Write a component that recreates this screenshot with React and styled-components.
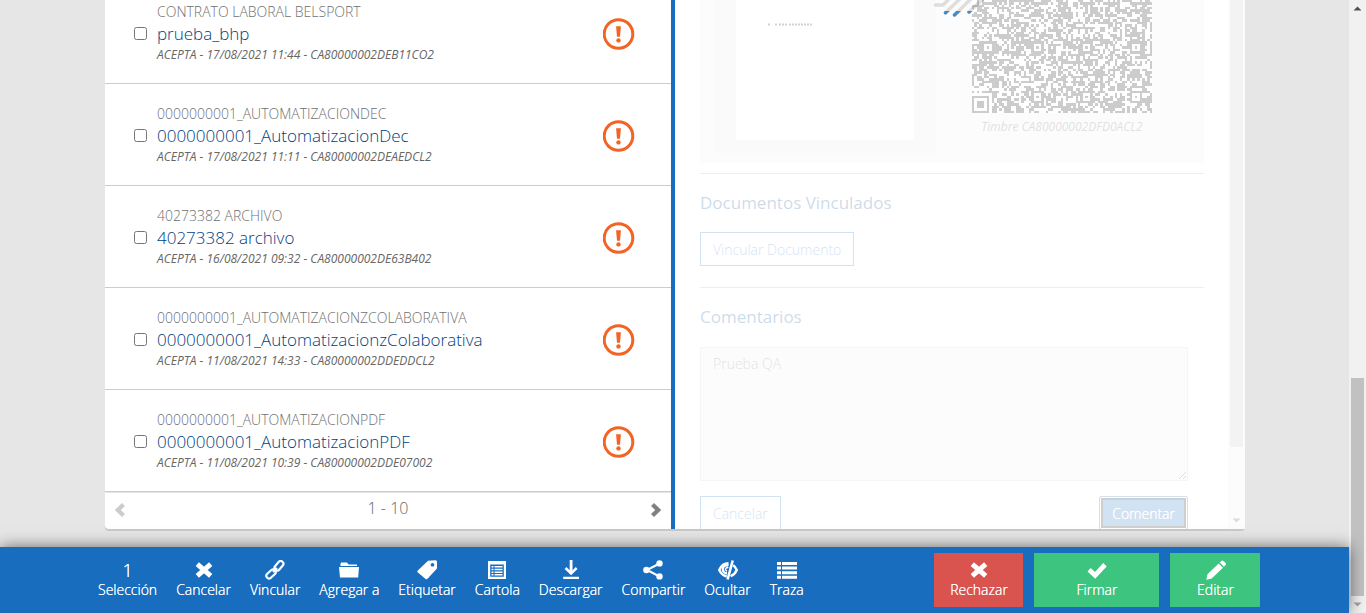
import React, { useMemo } from "react";
import styled, { createGlobalStyle } from "styled-components";

const BLUE = "#196dbf";

const GlobalStyle = createGlobalStyle`
  *, *::before, *::after { box-sizing: border-box; }
  body {
    margin: 0;
    background: #e6e6e6;
    color: #666;
    font-family: "Open Sans", "Liberation Sans", sans-serif;
    font-size: 14px;
    font-weight: 300;
  }
  button, textarea { font: inherit; }
`;

const Viewport = styled.div`
  display: flex;
  height: 100vh;
  overflow: hidden;
`;

const Page = styled.div`
  flex: 1;
  min-width: 0;
  display: flex;
  flex-direction: column;
`;

const Scroller = styled.main`
  flex: 1;
  min-height: 0;
  display: flex;
  flex-direction: column;
  justify-content: flex-end;
  overflow: hidden;
  padding: 0 104px 18px 105px;
`;

const Card = styled.div`
  flex: none;
  display: grid;
  grid-template-columns: 1fr 1fr;
  background: #fff;
  border-radius: 4px;
  box-shadow: 0 2px 0 #c8c8c8;
`;

const ListPane = styled.section`
  border-right: 4px solid ${BLUE};
`;

const DocumentList = styled.ul`
  list-style: none;
  margin: 0;
  padding: 0;
`;

const DocumentRow = styled.li`
  display: flex;
  align-items: center;
  height: 102px;
  padding: 2px 36px 0 29px;
  border-bottom: 1px solid #ccc;
`;

const RowLabel = styled.label`
  flex: 1;
  display: flex;
  align-items: center;
  gap: 10px;
`;

const Checkbox = styled.input`
  width: 13px;
  height: 13px;
  margin: 0;
`;

const RowText = styled.span`
  display: flex;
  flex-direction: column;
  padding-bottom: 2px;
`;

const Category = styled.span`
  font-size: 14px;
  line-height: 20px;
  color: #707070;
  text-transform: uppercase;
`;

const Title = styled.span`
  font-size: 17px;
  line-height: 24px;
  color: #004080;
`;

const Meta = styled.span`
  font-size: 12px;
  line-height: 17px;
  font-style: italic;
  font-weight: 400;
  color: #666;
`;

const Pager = styled.nav`
  display: flex;
  align-items: center;
  justify-content: space-between;
  height: 37px;
  padding: 0 9px 2px;
  border-top: 1px solid #e5e5e5;
  font-size: 16px;
`;

const PagerRange = styled.span`
  line-height: 30px;
  align-self: flex-start;
`;

const PagerButton = styled.button`
  display: flex;
  padding: 0;
  border: 0;
  background: none;
  color: ${(p) => (p.disabled ? "#ccc" : "#808080")};
`;

const DetailPane = styled.section`
  position: relative;
  display: flex;
  min-height: 0;
  height: 547px;
  overflow: hidden;
`;

const DetailBody = styled.div`
  flex: 1;
  padding: 0 24px 0 25px;
`;

const LoadingVeil = styled.div`
  position: absolute;
  inset: 0;
  background: rgba(255, 255, 255, 0.8);
`;

const LoadingMark = styled.svg`
  position: absolute;
  top: 0;
  left: 50%;
  margin-left: -28px;
`;

const Preview = styled.div`
  display: flex;
  align-items: flex-end;
  height: 181px;
  background: #f0f0f0;
  overflow: hidden;
`;

const Sheet = styled.div`
  flex: none;
  display: flex;
  margin: 0 36px 10px 15px;
  padding: 0 22px 13px 21px;
  background: #e6e6e6;
`;

const Paper = styled.div`
  width: 178px;
  height: 170px;
  padding: 41px 32px;
  background: #fff;
`;

const Stamp = styled.figure`
  display: flex;
  flex-direction: column;
  align-items: center;
  margin: 0;
  padding-bottom: 22px;
  font-size: 12px;
  font-style: italic;
  font-weight: 400;
  color: #666;
`;

const StampCaption = styled.figcaption`
  line-height: 28px;
`;

const Divider = styled.hr`
  height: 1px;
  margin: 10px 0 18px;
  border: 0;
  background: #aaa;
`;

const Heading = styled.h2`
  margin: 0 0 18px;
  font-size: 17px;
  line-height: 22px;
  font-weight: 400;
  color: #004b8d;
`;

const OutlineButton = styled.button`
  height: 34px;
  padding: 0 12px;
  border: 1px solid ${BLUE};
  background: #fff;
  color: ${BLUE};
`;

const LinkedActions = styled.div`
  display: flex;
  padding-bottom: 11px;
`;

const CommentBox = styled.textarea`
  display: block;
  width: calc(100% - 16px);
  height: 134px;
  margin-top: 19px;
  padding: 6px 12px;
  border: 1px solid #ccc;
  background: #f0f0f0;
  color: #666;
  resize: vertical;
`;

const CommentActions = styled.div`
  display: flex;
  justify-content: space-between;
  padding: 15px 16px 0 0;
`;

const FilledButton = styled.button`
  height: 34px;
  padding: 0 12px;
  border: 1px solid ${BLUE};
  outline: 2px solid #101010;
  outline-offset: -4px;
  box-shadow: inset 0 0 0 1px #fff;
  border-radius: 2px;
  background: ${BLUE};
  color: #fff;
  text-shadow: 0 0 0 #fff;
`;

const Toolbar = styled.footer`
  position: relative;
  display: flex;
  justify-content: space-between;
  align-items: center;
  height: 66px;
  padding: 0 89px 0 88px;
  background: ${BLUE};
  box-shadow: 0 0 15px rgba(0, 0, 0, 0.55);
`;

const ToolGroup = styled.div`
  display: flex;
  gap: ${(p) => p.$gap || 0}px;
`;

const Tool = styled.button`
  display: flex;
  flex-direction: column;
  align-items: center;
  padding: 6px 9px 0 10px;
  height: 54px;
  border: 0;
  background: none;
  color: #fff;
  line-height: 18px;
  text-shadow: 0 0 0 #fff;
  white-space: nowrap;
`;

const ActionButton = styled(Tool)`
  width: ${(p) => p.$width}px;
  background: ${(p) => p.$tone};
`;

const ToolIcon = styled.span`
  display: flex;
  align-items: center;
  justify-content: center;
  height: 22px;
  font-size: 18px;
`;

const ScrollTrack = styled.div`
  display: flex;
  flex-direction: column;
  align-items: center;
  width: 17px;
  background: #f1f1f1;
`;

const ScrollArrow = styled.svg`
  flex: none;
  width: 17px;
  height: 17px;
`;

const ScrollThumb = styled.div`
  width: 13px;
  height: ${(p) => p.$size};
  margin-top: auto;
  background: #c1c1c1;
`;

const InnerTrack = styled(ScrollTrack)`
  border-bottom-right-radius: 4px;
`;

const InnerThumb = styled.div`
  flex: 1;
  width: 13px;
  margin-bottom: 65px;
  background: #c1c1c1;
`;

const documents = [
  { category: "Contrato laboral Belsport", title: "prueba_bhp", meta: "ACEPTA - 17/08/2021 11:44 - CA80000002DEB11CO2" },
  { category: "0000000001_AutomatizacionDec", title: "0000000001_AutomatizacionDec", meta: "ACEPTA - 17/08/2021 11:11 - CA80000002DEAEDCL2" },
  { category: "40273382 archivo", title: "40273382 archivo", meta: "ACEPTA - 16/08/2021 09:32 - CA80000002DE63B402" },
  { category: "0000000001_AutomatizacionzColaborativa", title: "0000000001_AutomatizacionzColaborativa", meta: "ACEPTA - 11/08/2021 14:33 - CA80000002DDEDDCL2" },
  { category: "0000000001_AutomatizacionPDF", title: "0000000001_AutomatizacionPDF", meta: "ACEPTA - 11/08/2021 10:39 - CA80000002DDE07002" },
];

const icons = {
  cancel: <path d="M3.300 4.200 16.700 15.800M16.700 4.200 3.300 15.800" fill="none" stroke="currentColor" strokeWidth="5" />,
  link: (
    <g fill="none" stroke="currentColor" strokeWidth="2.2">
      <rect x="-5.300" y="-2.700" width="10.600" height="5.400" rx="2.700" transform="translate(14 5.800) rotate(-50)" />
      <rect x="-5.300" y="-2.700" width="10.600" height="5.400" rx="2.700" transform="translate(6 14) rotate(-42)" />
      <path d="M8 12 12 8" />
    </g>
  ),
  folder: <path d="M2 2.500h6l1.500 2H18V6H1.500V4ZM0 7h20l-.8 10.500H1Z" fill="currentColor" />,
  tag: <path fillRule="evenodd" d="M11 .8 18.500.3Q20 .2 20 1.800V8.500L10.500 18.700Q9.500 19.800 8.300 18.700L.9 12.600Q-.2 11.600.8 10.500ZM15.500 3a1.800 1.800 0 1 0 .01 0Z" fill="currentColor" />,
  sheet: (
    <path fillRule="evenodd" d="M1 1h18v18H1ZM3.200 4.600v12.200h13.600V4.600ZM4.500 6h2v1.500h-2ZM7.500 6h8v1.500h-8ZM4.500 8.700h2v1.500h-2ZM7.500 8.700h8v1.500h-8ZM4.500 11.400h2v1.500h-2ZM7.500 11.400h8v1.500h-8ZM4.500 14.100h2v1.500h-2ZM7.500 14.100h8v1.500h-8Z" fill="currentColor" />
  ),
  download: <path d="M8.700 0h2.800v10.200l3.300-3.200 1.700 2-6.400 6.300L3.600 9l1.800-2 3.300 3.200ZM2.200 16.700h15.800V19H2.200Z" fill="currentColor" />,
  share: (
    <g fill="currentColor">
      <path d="M16.500 3.500 4 10l12.500 6.500" fill="none" stroke="currentColor" strokeWidth="2" />
      <circle cx="16.500" cy="3.400" r="3.200" />
      <circle cx="3.400" cy="10" r="3.200" />
      <circle cx="16.500" cy="16.400" r="3.200" />
    </g>
  ),
  hide: (
    <g fill="none" stroke="currentColor" strokeWidth="2.400">
      <path d="M10.500 3.300C6 3.300 3 6 1.200 10c1.700 3.500 4 5.700 7.500 6.500" />
      <path d="M15.200 5.300c1.500 1.100 2.700 2.700 3.600 4.700-1.200 2.800-3.300 5-6.200 6.200" />
      <path d="M10.500 5.700a4 4 0 1 0-1.400 7.600" />
      <path d="M10.300 8a1.700 1.700 0 1 0-1.200 3" strokeWidth="1.500" />
      <path d="M14.700.5 9.600 19.500" strokeWidth="2.600" />
    </g>
  ),
  list: <path d="M0 2h4v3H0ZM5 2h15v3H5ZM0 6.600h4v3H0ZM5 6.600h15v3H5ZM0 11.200h4v3H0ZM5 11.200h15v3H5ZM0 15.800h4v3H0ZM5 15.800h15v3H5Z" fill="currentColor" />,
  check: <path d="M.5 11.500 3.700 8.100 8 11.900 16.200 3 19.700 6.500 8.200 18.800Z" fill="currentColor" />,
  pencil: <path d="M1.500 14.200 12.700 3.500 17 7.800 5.700 18.600.3 19.700ZM13.700 2.500 15.600.7Q16.500 0 17.400.9L19.600 3.100Q20.500 4 19.600 5L17.900 6.800Z" fill="currentColor" />,
};

const Icon = ({ name }) => (
  <svg width="20" height="20" viewBox="0 0 20 20" aria-hidden="true">
    {icons[name]}
  </svg>
);

const AlertIcon = () => (
  <svg width="32" height="32" viewBox="0 0 32 32" role="img" aria-label="Pendiente">
    <circle cx="15.500" cy="16" r="14.300" fill="none" stroke="#f26324" strokeWidth="3" />
    <path d="M13.100 8.300h4.800l-.9 10.500h-3Z" fill="#f26324" />
    <circle cx="15.500" cy="22.400" r="2.200" fill="#f26324" />
  </svg>
);

const Chevron = ({ flip }) => (
  <svg width="12" height="16" viewBox="0 0 12 16" aria-hidden="true">
    <path d="M1 4 4 1 11.200 8 4 15 1 12 5.200 8Z" fill="currentColor" transform={flip ? "matrix(-1 0 0 1 12 0)" : undefined} />
  </svg>
);

const Arrow = ({ up, dark }) => (
  <ScrollArrow viewBox="0 0 17 17" aria-hidden="true">
    <path d={up ? "M4.500 10.500h8l-4-4Z" : "M4.500 6.500h8l-4 4Z"} fill={dark ? "#505050" : "#a3a3a3"} />
  </ScrollArrow>
);

const MODULES = 73;
const ALIGN = [6, 26, 46, 66];

function buildModules() {
  let seed = 20210817;
  const random = () => {
    seed = (seed * 1664525 + 1013904223) >>> 0;
    return seed / 4294967296;
  };
  let path = "";
  for (let y = 0; y < MODULES; y++) {
    for (let x = 0; x < MODULES; x++) {
      let on = random() < 0.54;
      if (x === 6 || y === 6) on = (x + y) % 2 === 0;
      for (const ax of ALIGN) {
        for (const ay of ALIGN) {
          const d = Math.max(Math.abs(x - ax), Math.abs(y - ay));
          if (d <= 2) on = d !== 1;
        }
      }
      for (const [fx, fy] of [[3, 3], [69, 3], [3, 69]]) {
        const d = Math.max(Math.abs(x - fx), Math.abs(y - fy));
        if (d <= 4) on = d !== 2 && d !== 4;
      }
      if (on) path += `M${x} ${y}h1v1h-1Z`;
    }
  }
  return path;
}

const QrCode = () => {
  const path = useMemo(buildModules, []);
  return (
    <svg width="180" height="180" viewBox={`0 0 ${MODULES} ${MODULES}`} shapeRendering="crispEdges" role="img" aria-label="QR">
      <rect width={MODULES} height={MODULES} fill="#fff" />
      <path d={path} fill="#000" />
    </svg>
  );
};

const tools = [
  ["cancel", "Cancelar"],
  ["link", "Vincular"],
  ["folder", "Agregar a"],
  ["tag", "Etiquetar"],
  ["sheet", "Cartola"],
  ["download", "Descargar"],
  ["share", "Compartir"],
  ["hide", "Ocultar"],
  ["list", "Traza"],
];

const actions = [
  ["cancel", "Rechazar", "#d9534f", 89],
  ["check", "Firmar", "#3dc47e", 125],
  ["pencil", "Editar", "#3dc47e", 90],
];

export default function App() {
  return (
    <>
      <GlobalStyle />
      <Viewport>
        <Page>
          <Scroller>
            <Card>
              <ListPane>
                <DocumentList>
                  {documents.map((doc, i) => (
                    <DocumentRow key={doc.meta}>
                      <RowLabel htmlFor={`doc-${i}`}>
                        <Checkbox type="checkbox" id={`doc-${i}`} />
                        <RowText>
                          <Category>{doc.category}</Category>
                          <Title>{doc.title}</Title>
                          <Meta>{doc.meta}</Meta>
                        </RowText>
                      </RowLabel>
                      <AlertIcon />
                    </DocumentRow>
                  ))}
                </DocumentList>
                <Pager>
                  <PagerButton disabled aria-label="Anterior"><Chevron flip /></PagerButton>
                  <PagerRange>1 - 10</PagerRange>
                  <PagerButton aria-label="Siguiente"><Chevron /></PagerButton>
                </Pager>
              </ListPane>
              <DetailPane>
                <DetailBody>
                  <Preview>
                    <Sheet>
                      <Paper>
                        <svg width="46" height="3" viewBox="0 0 46 3" aria-hidden="true">
                          <path d="M0 1.500h3M7 1.500h2M11 1.500h8M21 1.500h14M36 1.500h2M39 1.500h5" stroke="#222" strokeWidth="2" strokeDasharray="2 1" />
                        </svg>
                      </Paper>
                    </Sheet>
                    <Stamp>
                      <QrCode />
                      <StampCaption>Timbre CA80000002DFD0ACL2</StampCaption>
                    </Stamp>
                  </Preview>
                  <Divider />
                  <Heading>Documentos Vinculados</Heading>
                  <LinkedActions>
                    <OutlineButton>Vincular Documento</OutlineButton>
                  </LinkedActions>
                  <Divider />
                  <Heading>Comentarios</Heading>
                  <CommentBox aria-label="Comentarios" defaultValue="Prueba QA" />
                  <CommentActions>
                    <OutlineButton>Cancelar</OutlineButton>
                    <FilledButton>Comentar</FilledButton>
                  </CommentActions>
                </DetailBody>
                <InnerTrack>
                  <InnerThumb />
                  <Arrow dark />
                </InnerTrack>
                <LoadingVeil />
                <LoadingMark width="60" height="40" viewBox="0 0 60 40" aria-hidden="true">
                  <defs>
                    <linearGradient id="mark" gradientUnits="userSpaceOnUse" x1="0" y1="0" x2="0" y2="40">
                      <stop offset="0.725" stopColor="#000" stopOpacity="0.12" />
                      <stop offset="0.725" stopColor="#448bc4" />
                    </linearGradient>
                  </defs>
                  <g fill="none" stroke="url(#mark)" strokeWidth="3.500" strokeLinecap="round">
                    <path d="M3.500 23H11L24 10" />
                    <path d="M13.500 30.800 32 13" />
                    <path d="M22.500 33 45 11" />
                    <path d="M37 30 54 14" />
                  </g>
                </LoadingMark>
              </DetailPane>
            </Card>
          </Scroller>
          <Toolbar>
            <ToolGroup>
              <Tool as="div">
                <ToolIcon>1</ToolIcon>
                Selección
              </Tool>
              {tools.map(([icon, label]) => (
                <Tool key={label}>
                  <ToolIcon><Icon name={icon} /></ToolIcon>
                  {label}
                </Tool>
              ))}
            </ToolGroup>
            <ToolGroup $gap={11}>
              {actions.map(([icon, label, tone, width]) => (
                <ActionButton key={label} $tone={tone} $width={width}>
                  <ToolIcon><Icon name={icon} /></ToolIcon>
                  {label}
                </ActionButton>
              ))}
            </ToolGroup>
          </Toolbar>
        </Page>
        <ScrollTrack>
          <Arrow up dark />
          <ScrollThumb $size="218px" />
          <Arrow />
        </ScrollTrack>
      </Viewport>
    </>
  );
}
